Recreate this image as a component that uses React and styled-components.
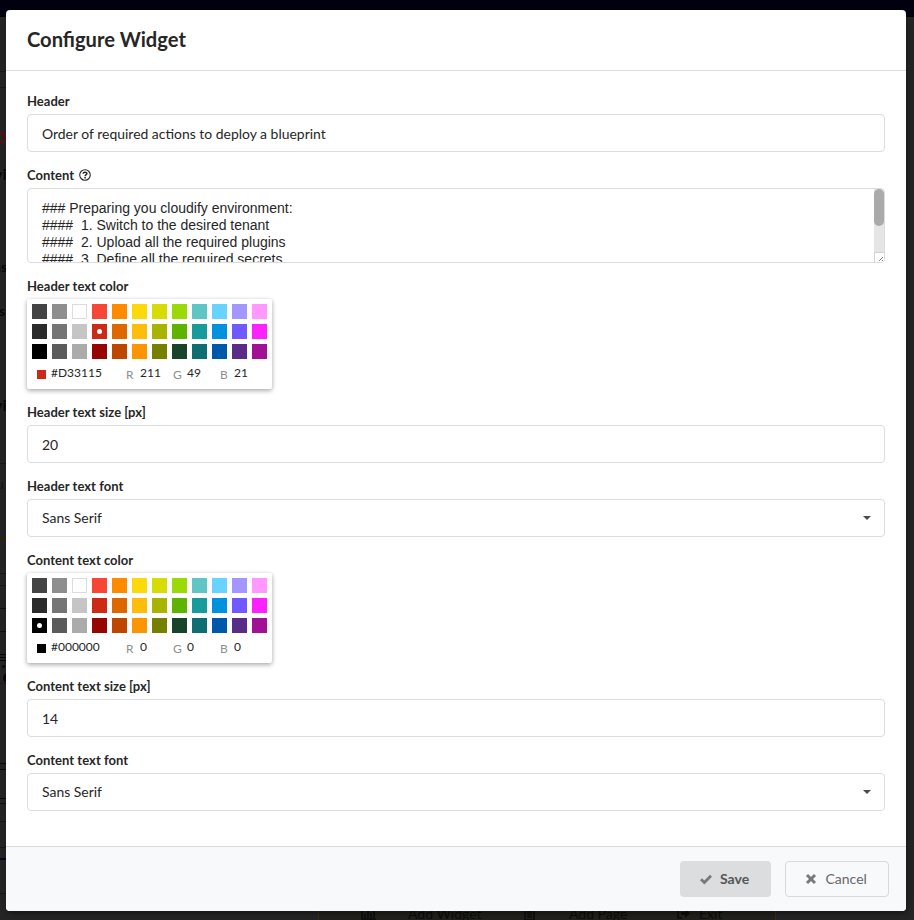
import React from 'react';
import styled, { createGlobalStyle } from 'styled-components';

const GlobalStyle = createGlobalStyle`
  *, *::before, *::after { box-sizing: border-box; }
  html, body { margin: 0; height: 100%; overflow: hidden; }
  body {
    font-family: Lato, "Liberation Sans", sans-serif;
    font-size: 14px;
    color: #262626;
    background: #222;
  }
`;

const Page = styled.div`
  position: relative;
  height: 920px;
  padding: 10px 8px 9px 6px;
  overflow: hidden;
  background: linear-gradient(#02010f 0 17px, #262626 17px);
`;

const Fragment = styled.span`
  position: absolute;
  left: ${p => p.$x}px;
  top: ${p => p.$y}px;
  font-size: ${p => p.$size || 14}px;
  line-height: 20px;
  font-weight: ${p => p.$bold ? 700 : 400};
  color: ${p => p.$color || '#090909'};
  white-space: nowrap;
`;

const Rule = styled.span`
  position: absolute;
  left: 0;
  top: ${p => p.$y}px;
  width: 6px;
  height: ${p => p.$h || 1}px;
  background: ${p => p.$color || '#181818'};
`;

const Blob = styled.span`
  position: absolute;
  left: ${p => p.$x}px;
  top: ${p => p.$y}px;
  width: ${p => p.$size}px;
  height: ${p => p.$size}px;
  border-radius: 50%;
  background: #090909;
`;

const EditBar = styled.div`
  position: absolute;
  left: 318px;
  top: 904px;
  width: 458px;
  height: 20px;
  background: #23221d;
  border: 1px solid #3a2f12;
`;

const BarIcon = styled.svg`
  position: absolute;
  left: ${p => p.$x}px;
  top: 908px;
  width: 16px;
  height: 12px;
  fill: none;
  stroke: #0c0c0b;
  stroke-width: 1.5;
`;

const Modal = styled.section`
  position: relative;
  display: flex;
  flex-direction: column;
  height: 901px;
  background: #fff;
  border-radius: 4px;
  overflow: hidden;
`;

const ModalShadow = styled.div`
  position: relative;
  border-radius: 4px;
  box-shadow: 1px 3px 3px rgba(0, 0, 0, 0.2), 1px 3px 15px 2px rgba(0, 0, 0, 0.2);
`;

const ModalHeader = styled.header`
  flex: none;
  height: 61px;
  padding: 0 21px;
  border-bottom: 1px solid #dbdcdd;
  font-size: 20.15px;
  line-height: 58px;
  font-weight: 700;
`;

const ModalBody = styled.form`
  flex: 1;
  display: flex;
  flex-direction: column;
  gap: 14px;
  padding: 21px;
`;

const Field = styled.div`
  display: flex;
  flex-direction: column;
  gap: 4px;
`;

const Label = styled.label`
  display: flex;
  align-items: center;
  gap: 5px;
  height: 18px;
  font-size: 13px;
  line-height: 18px;
  font-weight: 700;
  letter-spacing: 0.03px;
`;

const HelpSvg = styled.svg`
  width: 12px;
  height: 12px;
`;

const Input = styled.input`
  width: 100%;
  height: 38px;
  padding: 1px 14px 0;
  border: 1px solid #dbdcdd;
  border-radius: 4px;
  outline: none;
  background: #fff;
  color: #262626;
  font: 14px/20px Lato, sans-serif;
  font-size: 13.95px;
`;

const TextBox = styled.div`
  display: flex;
  justify-content: space-between;
  height: 75px;
  border: 1px solid #dbdcdd;
  border-radius: 4px;
  overflow: hidden;
`;

const Markdown = styled.div`
  padding: 11px 14px;
  font: 14px/17px "Liberation Sans", sans-serif;
  white-space: pre;
`;

const ScrollTrack = styled.div`
  display: flex;
  flex-direction: column;
  justify-content: space-between;
  width: 10px;
  background: #e5e5e5;
`;

const ScrollThumb = styled.div`
  height: 37px;
  border-radius: 5px;
  background: #aaa;
`;

const Resizer = styled.svg`
  width: 10px;
  height: 10px;
  border-top: 1px solid #d2d2d2;
  border-left: 1px solid #d2d2d2;
  background: #fff;
`;

const Select = styled.div`
  display: flex;
  align-items: center;
  justify-content: space-between;
  height: 38px;
  padding: 0 13px 0 14px;
  border: 1px solid #dbdcdd;
  border-radius: 4px;
  font-size: 13.95px;
  line-height: 20px;
`;

const Caret = styled.i`
  border: 4px solid transparent;
  border-top-color: #4b4b4b;
  border-bottom-width: 0;
`;

const Picker = styled.div`
  width: 245px;
  height: 90px;
  padding: 5px;
  border-radius: 2px;
  background: #fff;
  box-shadow: 0 2px 5px rgba(0, 0, 0, 0.22), 0 1px 4px rgba(0, 0, 0, 0.16);
`;

const Swatches = styled.div`
  display: grid;
  grid-template-columns: repeat(12, 15px);
  gap: 5px;
`;

const Swatch = styled.span`
  display: flex;
  align-items: center;
  justify-content: center;
  height: 15px;
  background: ${p => p.$color};
  box-shadow: ${p => p.$color === '#fff' ? 'inset 0 0 0 1px #dcdcdc' : 'none'};
`;

const Dot = styled.i`
  width: 5px;
  height: 5px;
  border-radius: 50%;
  background: #fff;
`;

const Values = styled.div`
  display: grid;
  grid-template-columns: 14px 75px 14px 33px 14px 33px 14px auto;
  margin: 5px 0 0 5px;
  font-size: 12px;
  line-height: 18px;
`;

const Preview = styled.i`
  width: 9px;
  height: 9px;
  margin-top: 6px;
  background: ${p => p.$color};
`;

const Channel = styled.span`
  padding-top: 2px;
  color: #8e8e8e;
`;

const ModalFooter = styled.footer`
  flex: none;
  display: flex;
  justify-content: flex-end;
  gap: 14px;
  height: 65px;
  padding: 14px 17px;
  border-top: 1px solid #d7d9da;
  background: #f8f9fb;
`;

const Button = styled.button`
  display: flex;
  align-items: center;
  gap: ${p => p.$primary ? 8 : 8.5}px;
  width: ${p => p.$primary ? 91 : 104}px;
  height: 36px;
  padding: 0 ${p => p.$primary ? 20 : 19}px;
  border: ${p => p.$primary ? 'none' : '1px solid #d7d9db'};
  border-radius: 4px;
  background: ${p => p.$primary ? '#dcddde' : 'transparent'};
  color: ${p => p.$primary ? '#555657' : '#666768'};
  font: ${p => p.$primary ? 700 : 400} 14px/20px Lato, sans-serif;
`;

const ButtonIcon = styled.svg`
  flex: none;
  width: 12px;
  height: 12px;
  fill: none;
  stroke: #77797a;
`;

const COLORS = [
  '#444444', '#8e8e8e', '#fff', '#f54636', '#ff8a00', '#fcd90a', '#d7dc05', '#9bd908', '#5fc6c4', '#69d3ff', '#a397ff', '#ff98ff',
  '#2b2b2b', '#757575', '#c5c5c5', '#cd2917', '#de6700', '#febd0a', '#a8b400', '#5db300', '#179b9b', '#0091df', '#7059ff', '#fb22ff',
  '#000000', '#5b5b5b', '#ababab', '#960500', '#be4700', '#fd9500', '#767f00', '#19442c', '#0f6e71', '#0058aa', '#5a2c89', '#a01193',
];

function ColorPicker({ selected, hex, rgb }) {
  const [r, g, b] = rgb;
  return (
    <Picker>
      <Swatches>
        {COLORS.map((c, i) => (
          <Swatch key={c} $color={c}>{i === selected && <Dot />}</Swatch>
        ))}
      </Swatches>
      <Values>
        <Preview $color={COLORS[selected]} />
        <span>{hex}</span>
        <Channel>R</Channel><span>{r}</span>
        <Channel>G</Channel><span>{g}</span>
        <Channel>B</Channel><span>{b}</span>
      </Values>
    </Picker>
  );
}

function HelpIcon() {
  return (
    <HelpSvg viewBox="0 0 12 12" fill="none" stroke="#262626">
      <circle cx="6" cy="6" r="5.3" strokeWidth="1.1" />
      <path d="M4.1 4.7c.1-2 3.9-2 3.8.1C7.8 5.8 6.2 5.7 6.1 7.2M6.1 8v1.5" strokeWidth="1.5" />
    </HelpSvg>
  );
}

const content = `### Preparing you cloudify environment:
####  1. Switch to the desired tenant
####  2. Upload all the required plugins
####  3. Define all the required secrets`;

function Backdrop() {
  return (
    <>
      <Rule $y={71} /><Rule $y={87} />
      <Fragment $x={-5} $y={125} $size={20} $color="#5a120d" $bold>o</Fragment>
      <Fragment $x={-6} $y={164} $size={16} $bold>vi</Fragment>
      <Fragment $x={-7} $y={257} $bold>ns</Fragment>
      <Fragment $x={-1} $y={301} $bold>s</Fragment>
      <Fragment $x={-6} $y={395} $size={16} $bold>vi</Fragment>
      <Rule $y={463} />
      <Fragment $x={-4} $y={474} $color="#151515">u</Fragment>
      <Rule $y={538} $h={2} $color="#352704" />
      <Rule $y={573} /><Rule $y={585} />
      <Rule $y={608} $color="#101010" /><Rule $y={631} $color="#101010" />
      <Rule $y={654} $color="#080808" /><Rule $y={657} $color="#080808" /><Rule $y={660} $color="#080808" />
      <Blob $x={2} $y={665} $size={3} />
      <Blob $x={3} $y={673} $size={10} />
      <Rule $y={683} $color="#35130e" />
      <Rule $y={763} $color="#080808" /><Rule $y={769} $color="#080808" />
      <Rule $y={798} $color="#080808" /><Rule $y={803} $color="#111" />
      <Rule $y={821} /><Rule $y={847} />
      <Rule $y={858} $h={2} $color="#08051b" /><Rule $y={893} />
      <EditBar />
      <BarIcon $x={361} viewBox="0 0 16 12"><path d="M1 1v10h14M4 10V6M7 10V3M10 10V5M13 10V1" /></BarIcon>
      <Fragment $x={408} $y={904} $color="#0c0c0b">Add Widget</Fragment>
      <BarIcon $x={523} viewBox="0 0 16 12"><path d="M2 0h9v12H2zM4 4h5M4 6.5h5M4 9h5" /></BarIcon>
      <Fragment $x={569} $y={904} $color="#0c0c0b">Add Page</Fragment>
      <BarIcon $x={676} viewBox="0 0 16 12"><path d="M6 1H2v9h4" /><path d="M5 4h4V1l5 4.5L9 10V7H5z" fill="#0c0c0b" stroke="none" /></BarIcon>
      <Fragment $x={699} $y={904} $color="#0c0c0b">Exit</Fragment>
    </>
  );
}

export default function App() {
  return (
    <Page>
      <GlobalStyle />
      <Backdrop />
      <ModalShadow>
        <Modal>
          <ModalHeader>Configure Widget</ModalHeader>
          <ModalBody>
            <Field>
              <Label>Header</Label>
              <Input defaultValue="Order of required actions to deploy a blueprint" />
            </Field>
            <Field>
              <Label>Content <HelpIcon /></Label>
              <TextBox>
                <Markdown>{content}</Markdown>
                <ScrollTrack>
                  <ScrollThumb />
                  <Resizer viewBox="0 0 9 9"><path d="M4 8l4-4M7 8l1-1" stroke="#444" strokeDasharray="1 .5" /></Resizer>
                </ScrollTrack>
              </TextBox>
            </Field>
            <Field>
              <Label>Header text color</Label>
              <ColorPicker selected={15} hex="#D33115" rgb={[211, 49, 21]} />
            </Field>
            <Field>
              <Label>Header text size [px]</Label>
              <Input defaultValue="20" />
            </Field>
            <Field>
              <Label>Header text font</Label>
              <Select>Sans Serif<Caret /></Select>
            </Field>
            <Field>
              <Label>Content text color</Label>
              <ColorPicker selected={24} hex="#000000" rgb={[0, 0, 0]} />
            </Field>
            <Field>
              <Label>Content text size [px]</Label>
              <Input defaultValue="14" />
            </Field>
            <Field>
              <Label>Content text font</Label>
              <Select>Sans Serif<Caret /></Select>
            </Field>
          </ModalBody>
          <ModalFooter>
            <Button type="button" $primary>
              <ButtonIcon viewBox="0 0 12 12"><path d="M1 6.2l3.4 3.3L11 2.8" strokeWidth="2.8" /></ButtonIcon>
              Save
            </Button>
            <Button type="button">
              <ButtonIcon viewBox="0 0 12 12"><path d="M2 2l8 8M10 2l-8 8" strokeWidth="3" /></ButtonIcon>
              Cancel
            </Button>
          </ModalFooter>
        </Modal>
      </ModalShadow>
    </Page>
  );
}
